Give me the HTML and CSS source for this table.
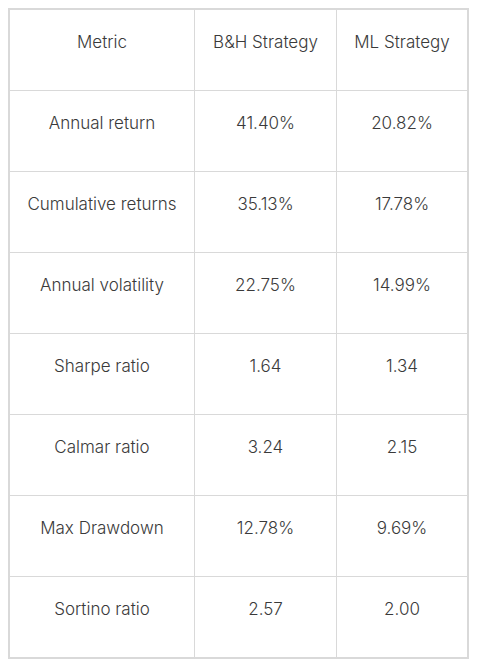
FILE: index.html
```html
<!DOCTYPE html>
<html>
<head>
<meta charset="utf-8">
<link rel="stylesheet" href="styles.css">
</head>
<body>
<div class="table">
  <div class="cell c1">Metric</div><div class="cell c2">B&amp;H Strategy</div><div class="cell c3">ML Strategy</div>
  <div class="cell c1">Annual return</div><div class="cell c2">41.40%</div><div class="cell c3">20.82%</div>
  <div class="cell c1">Cumulative returns</div><div class="cell c2">35.13%</div><div class="cell c3">17.78%</div>
  <div class="cell c1">Annual volatility</div><div class="cell c2">22.75%</div><div class="cell c3">14.99%</div>
  <div class="cell c1">Sharpe ratio</div><div class="cell c2">1.64</div><div class="cell c3">1.34</div>
  <div class="cell c1">Calmar ratio</div><div class="cell c2">3.24</div><div class="cell c3">2.15</div>
  <div class="cell c1">Max Drawdown</div><div class="cell c2">12.78%</div><div class="cell c3">9.69%</div>
  <div class="cell c1 last">Sortino ratio</div><div class="cell c2 last">2.57</div><div class="cell c3 last">2.00</div>
</div>
</body>
</html>
```
FILE: styles.css
```css
html, body {
  margin: 0;
  padding: 0;
  background: #ffffff;
}
body {
  padding: 8px 0 0 8px;
}
.table {
  width: 457px;
  border: 2px solid #d9d9d9;
  display: grid;
  grid-template-columns: 184px 141px 130px;
  column-gap: 1px;
  background: #d9d9d9;
  row-gap: 1px;
  font-family: Inter, sans-serif;
  font-size: 17px;
  font-weight: 350;
  color: #3a3a3a;
}
.cell {
  background: #ffffff;
  height: 80px;
  box-sizing: border-box;
  padding-top: 20px;
  line-height: 24px;
  text-align: center;
  white-space: nowrap;
}
```
